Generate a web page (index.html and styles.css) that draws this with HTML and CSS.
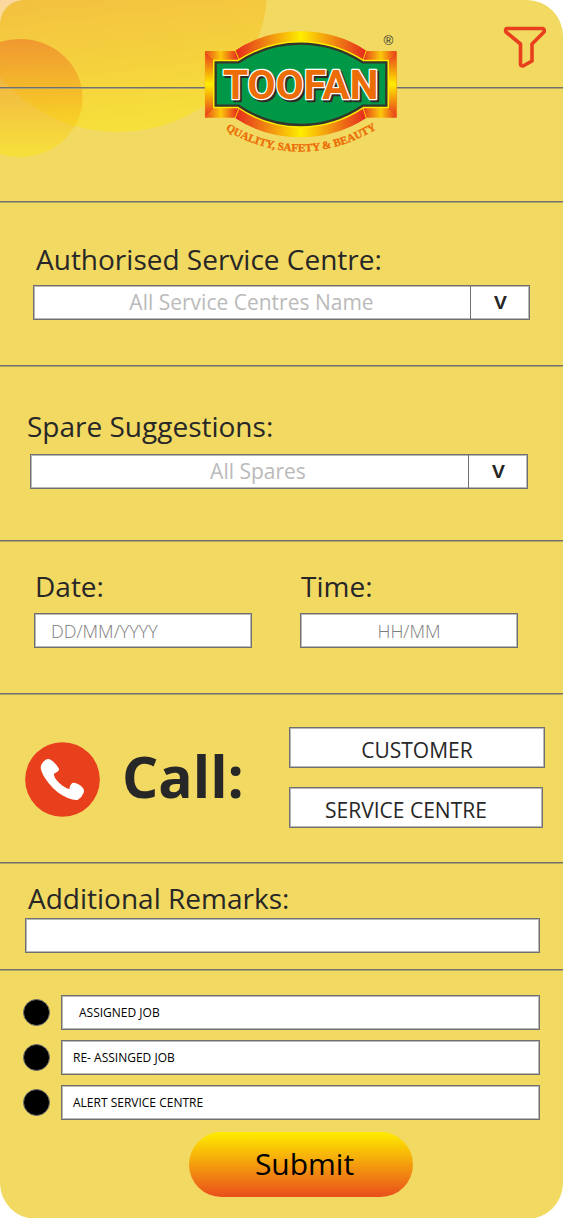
FILE: index.html
```html
<!DOCTYPE html>
<html lang="en">
<head>
<meta charset="utf-8">
<meta name="viewport" content="width=device-width, initial-scale=1">
<title>Toofan Service</title>
<link rel="stylesheet" href="styles.css">
</head>
<body>
<main class="page">
  <svg class="blobs" viewBox="0 0 270 160" aria-hidden="true">
    <defs>
      <linearGradient id="sun" x1="0" y1="0" x2="0" y2="1">
        <stop offset="0" stop-color="#e94e1b"/><stop offset="1" stop-color="#ffed00"/>
      </linearGradient>
      <linearGradient id="sunTilt" x1="0.42" y1="0" x2="0.55" y2="1">
        <stop offset="0" stop-color="#e94e1b"/><stop offset="1" stop-color="#ffed00"/>
      </linearGradient>
    </defs>
    <ellipse cx="118" cy="-10" rx="149" ry="142" fill="url(#sunTilt)" opacity=".4"/>
    <ellipse cx="20" cy="98" rx="62.5" ry="59" fill="url(#sun)" opacity=".4"/>
  </svg>

  <header class="header">
    <div class="topbar">
      <button class="filter" type="button" aria-label="Filter">
        <svg viewBox="0 0 44 44" width="44" height="44" aria-hidden="true">
          <path d="M4.500 4.500H40.500Q43 5.500 42 8L30 20V37L21 42Q18.500 42 18.500 40V20L4 8Q3 5.500 4.500 4.500Z" fill="none" stroke="#e8401d" stroke-width="3.600" stroke-linejoin="round"/>
        </svg>
      </button>
    </div>
    <svg class="logo" viewBox="27 30 582 372" role="img" aria-label="Toofan, Quality, Safety and Beauty">
      <defs>
        <linearGradient id="arch">
          <stop offset="0" stop-color="#e6281e"/><stop offset=".25" stop-color="#f08a12"/><stop offset=".5" stop-color="#ffed00"/><stop offset=".75" stop-color="#f08a12"/><stop offset="1" stop-color="#e6281e"/>
        </linearGradient>
        <linearGradient id="post" x1="0" y1="0" x2="0" y2="1">
          <stop offset="0" stop-color="#e6321e"/><stop offset=".5" stop-color="#ffed00"/><stop offset="1" stop-color="#e6321e"/>
        </linearGradient>
        <linearGradient id="rail">
          <stop offset="0" stop-color="#e84a1a"/><stop offset=".5" stop-color="#fbc80a"/><stop offset="1" stop-color="#e6321e"/>
        </linearGradient>
        <path id="curve" d="M86 326Q316 464 550 324"/>
      </defs>
      <path d="M30 93H125V293H30Z" fill="url(#rail)"/>
      <path d="M510 93H605V293H510Z" fill="url(#rail)"/>
      <path d="M30 93L62 126V260L30 293Z" fill="url(#post)" stroke="#fbb80a" stroke-width="1"/>
      <path d="M605 93L573 126V260L605 293Z" fill="url(#post)" stroke="#fbb80a" stroke-width="1"/>
      <path d="M120 92Q205 34 316 34T514 92L505 150V235L514 294Q425 352 316 352T120 294L130 235V150Z" fill="url(#arch)"/>
      <path d="M120 90L134 124M514 90L503 124M120 295L134 260M514 295L503 260" stroke="#ffd800" stroke-width="3"/>
      <path d="M62 127H131Q215 71 316 71T503 127H574V257H503Q417 315 316 315T131 257H62Z" fill="none" stroke="#ffed00" stroke-width="16"/>
      <path d="M62 127H131Q215 71 316 71T503 127H574V257H503Q417 315 316 315T131 257H62Z" fill="#009846" stroke="#35352b" stroke-width="7"/>
      <text class="brand brand-shadow" x="323" y="244" text-anchor="middle">TOOFAN</text>
      <text class="brand" x="317" y="238" text-anchor="middle">TOOFAN</text>
      <text class="tagline" text-anchor="middle"><textPath href="#curve" startOffset="50%">QUALITY, SAFETY &amp; BEAUTY</textPath></text>
      <text class="mark" x="580" y="74" text-anchor="middle">®</text>
    </svg>
  </header>

  <form class="form">
    <section class="section centre">
      <label class="label" for="centre">Authorised Service Centre:</label>
      <div class="picker">
        <select id="centre" class="box"><option>All Service Centres Name</option></select>
        <span class="arrow" aria-hidden="true">v</span>
      </div>
    </section>

    <section class="section spares">
      <label class="label" for="spares">Spare Suggestions:</label>
      <div class="picker">
        <select id="spares" class="box"><option>All Spares</option></select>
        <span class="arrow" aria-hidden="true">v</span>
      </div>
    </section>

    <section class="section schedule">
      <div class="field">
        <label class="label" for="date">Date:</label>
        <input id="date" class="box date" type="text" placeholder="DD/MM/YYYY">
      </div>
      <div class="field">
        <label class="label" for="time">Time:</label>
        <input id="time" class="box time" type="text" placeholder="HH/MM">
      </div>
    </section>

    <section class="section call">
      <svg class="phone" viewBox="75 66 225 225" aria-hidden="true">
        <circle cx="187.500" cy="178.500" r="112" fill="#e8401d"/>
        <path d="M137 119Q145 114 153 120Q167 129 177 146Q179 153 162 161Q161 173 177 188Q192 203 208 207Q211 190 219 188Q230 187 244 199Q255 209 251 218Q246 231 234 239Q225 242 203 234Q169 219 145 188Q124 161 122 143Q123 129 137 119Z" fill="#fff"/>
      </svg>
      <h2 class="call-title">Call:</h2>
      <div class="call-buttons">
        <button class="box call-button" type="button">CUSTOMER</button>
        <button class="box call-button call-service" type="button">SERVICE CENTRE</button>
      </div>
    </section>

    <section class="section remarks">
      <label class="label" for="remarks">Additional Remarks:</label>
      <input id="remarks" class="box" type="text">
    </section>

    <section class="jobs">
      <div class="job">
        <input class="dot" id="assigned" type="radio" name="job">
        <label class="box job-label assigned" for="assigned">ASSIGNED JOB</label>
      </div>
      <div class="job">
        <input class="dot" id="reassigned" type="radio" name="job">
        <label class="box job-label" for="reassigned">RE- ASSINGED JOB</label>
      </div>
      <div class="job">
        <input class="dot" id="alert" type="radio" name="job">
        <label class="box job-label" for="alert">ALERT SERVICE CENTRE</label>
      </div>
      <button class="submit" type="submit">Submit</button>
    </section>
  </form>
</main>
</body>
</html>
```
FILE: styles.css
```css
* { box-sizing: border-box; }

body {
  margin: 0;
  background: #fff;
  color: #272727;
  font-family: "Open Sans", "Noto Sans", sans-serif;
}

.page {
  position: relative;
  padding-bottom: 22px;
  background: #f2d962;
  border-radius: 24px 36px 36px 36px;
}

.blobs {
  position: absolute;
  top: 0;
  left: 0;
  width: 270px;
  height: 160px;
}

.header,
.section {
  border-bottom: 1px solid #707070;
  box-shadow: 0 1px #b1a468;
}

.header {
  position: relative;
  display: grid;
  grid-template-columns: 36.2% 194px 1fr;
  grid-template-rows: 88px 113px;
}

.topbar {
  grid-area: 1 / 1 / 2 / 4;
  display: flex;
  justify-content: flex-end;
  align-items: center;
  padding: 4px 17px 0 0;
  border-bottom: 1px solid #707070;
  box-shadow: 0 1px #b1a468;
}

.filter {
  display: flex;
  padding: 0;
  border: 0;
  background: none;
}

.logo {
  grid-area: 1 / 2 / 3 / 3;
  width: 194px;
  height: 124px;
  margin-top: 30px;
}

.brand {
  font: 700 122px "Liberation Sans Narrow", Roboto, sans-serif;
  fill: #ec6c05;
  stroke: #fff;
  stroke-width: 8px;
  stroke-linejoin: round;
  paint-order: stroke;
}

.brand-shadow {
  fill: #2b2b26;
  stroke: #2b2b26;
}

.tagline {
  font: 700 33px "Liberation Serif", serif;
  fill: #ec6c05;
  stroke: #ec6c05;
  stroke-width: 1px;
}

.mark {
  font: 400 40px "Liberation Sans", sans-serif;
  fill: #333;
}

.label {
  display: block;
  font-size: 28px;
  line-height: 36px;
}

.box {
  display: block;
  width: 100%;
  height: 35px;
  margin: 0;
  padding: 0;
  border: 1px solid #707070;
  border-radius: 0;
  background: #fff;
  box-shadow: inset 0 0 0 1px #b8b8b8;
  color: inherit;
  font: inherit;
}

.centre { padding: 39px 33px 45px; }
.centre .label { padding-left: 3px; }
.centre .picker { margin-top: 8px; }

.spares { padding: 42px 35px 51px 30px; }
.spares .label { margin-left: -3px; }
.spares .picker { margin-top: 10px; }
.spares select { padding-left: 18px; }

.picker {
  display: grid;
  grid-template-columns: 1fr 60px;
}

.picker select {
  grid-area: 1 / 1 / 2 / 3;
  padding-right: 60px;
  appearance: none;
  color: #bababa;
  font-size: 21px;
  line-height: 31px;
  text-align-last: center;
}

.arrow {
  grid-area: 1 / 2;
  border-left: 1px solid #707070;
  font-size: 24px;
  font-weight: 600;
  line-height: 30px;
  text-align: center;
  pointer-events: none;
}

.schedule {
  display: grid;
  grid-template-columns: 1fr 1fr;
  gap: 48px;
  padding: 27px 45px 45px 34px;
}

.schedule .box { margin-top: 9px; font-size: 18px; font-weight: 300; }
.schedule .box::placeholder { color: #7c7c7c; opacity: 1; }
.schedule .label { padding-left: 1px; }
.date { padding-left: 16px; }
.time { text-align: center; }

.call {
  display: flex;
  padding: 33px 18px 34px 25px;
}

.phone {
  width: 75px;
  height: 75px;
  margin-top: 15px;
}

.call-title {
  margin: 9px 0 0 22px;
  font-size: 57px;
  font-weight: 700;
  line-height: 80px;
}

.call-buttons {
  display: grid;
  gap: 19px;
  width: 256px;
  margin-left: auto;
}

.call-button {
  height: 41px;
  padding-top: 4px;
  font-size: 21px;
}

.call-service { width: 254px; padding-right: 20px; }

.remarks { padding: 17px 23px 16px 25px; }
.remarks .label { padding-left: 3px; }
.remarks .box { margin-top: 2px; }

.jobs {
  display: grid;
  gap: 10px;
  padding: 25px 23px 0;
}

.job {
  display: grid;
  grid-template-columns: 27px 1fr;
  gap: 11px;
  align-items: center;
}

.dot {
  width: 27px;
  height: 27px;
  margin: 0;
  appearance: none;
  border: 1px solid #707070;
  border-radius: 50%;
  background: #000;
}

.job-label {
  padding-left: 11px;
  color: #000;
  font-size: 12px;
  line-height: 33px;
}

.assigned { padding-left: 17px; }

.submit {
  width: 224px;
  height: 65px;
  margin: 2px 0 0 166px;
  padding: 0 0 2px 7px;
  border: 0;
  border-radius: 33px;
  background: linear-gradient(#ffed00, #e94e1b);
  color: #000;
  font: inherit;
  font-size: 30px;
}
```
